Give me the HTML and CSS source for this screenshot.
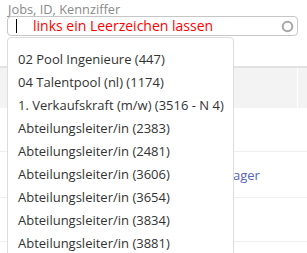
FILE: index.html
```html
<!DOCTYPE html>
<html lang="de">
<head>
    <meta charset="UTF-8">
    <meta name="viewport" content="width=device-width, initial-scale=1.0">
    <title>Jobsuche</title>
    <link rel="stylesheet" href="styles.css">
</head>
<body>
    <div class="search">
        <label class="search-label" for="job_search">Jobs, ID, Kennziffer</label>
        <div class="search-box">
            <span class="caret"></span>
            <span class="hint">links ein Leerzeichen lassen</span>
            <svg class="spinner" width="13" height="13" viewBox="0 0 13 13">
                <circle cx="6.5" cy="6.5" r="4.8" fill="none" stroke="#a8a8a8" stroke-width="2"/>
            </svg>
        </div>
        <ul class="dropdown">
            <li>02 Pool Ingenieure (447)</li>
            <li>04 Talentpool (nl) (1174)</li>
            <li>1. Verkaufskraft (m/w) (3516 - N 4)</li>
            <li>Abteilungsleiter/in (2383)</li>
            <li>Abteilungsleiter/in (2481)</li>
            <li>Abteilungsleiter/in (3606)</li>
            <li>Abteilungsleiter/in (3654)</li>
            <li>Abteilungsleiter/in (3834)</li>
            <li>Abteilungsleiter/in (3881)</li>
        </ul>
    </div>

    <div class="jobs">
        <div class="jobs-head">
            <div class="cell-main"></div>
            <div class="cell-side"></div>
        </div>
        <div class="jobs-row row-short"></div>
        <div class="jobs-row"><a class="job-link" href="#">ager</a></div>
        <div class="jobs-row row-short"></div>
    </div>
</body>
</html>
```

FILE: styles.css
```css
body {
    margin: 0;
    font-family: "Open Sans", "DejaVu Sans", sans-serif;
    background: #fff;
    overflow: hidden;
    height: 253px;
}
.search {
    position: relative;
    padding: 2px 9px 0 7px;
}
.search-label {
    display: block;
    margin-left: 1px;
    font-size: 12.8px;
    line-height: 14px;
    color: #8a8a8a;
}
.search-box {
    height: 18px;
    border: 1px solid #c6c6c6;
    border-radius: 4px;
    display: flex;
    align-items: center;
    padding: 0 3px 0 8px;
}
.caret {
    width: 1px;
    height: 14px;
    background: #000;
}
.hint {
    margin-left: 16px;
    font-size: 14px;
    color: #f00;
    line-height: 18px;
    flex: 1;
}
.spinner {
    display: block;
}
.dropdown {
    position: absolute;
    z-index: 2;
    left: 7px;
    top: 37px;
    width: 225px;
    height: 240px;
    margin: 0;
    padding: 10px 0 0;
    list-style: none;
    background: #fff;
    border: 1px solid #ddd;
    border-radius: 4px 4px 0 0;
}
.dropdown li {
    padding-left: 10px;
    font-size: 13px;
    line-height: 23px;
    color: #333;
    white-space: nowrap;
}
.jobs {
    margin-top: 30px;
}
.jobs-head {
    display: flex;
    height: 40px;
    border-top: 2px solid #e2e2e2;
}
.cell-main {
    flex: 1;
    background: #f3f3f3;
    border-right: 1px solid #fff;
}
.cell-side {
    width: 9px;
    background: #f3f3f3;
}
.jobs-row {
    height: 45px;
    border-bottom: 1px solid #efefef;
    display: flex;
    align-items: center;
    padding-left: 233px;
}
.row-short {
    height: 43px;
}
.job-link {
    font-size: 13px;
    color: #5563c1;
    text-decoration: none;
}
```
